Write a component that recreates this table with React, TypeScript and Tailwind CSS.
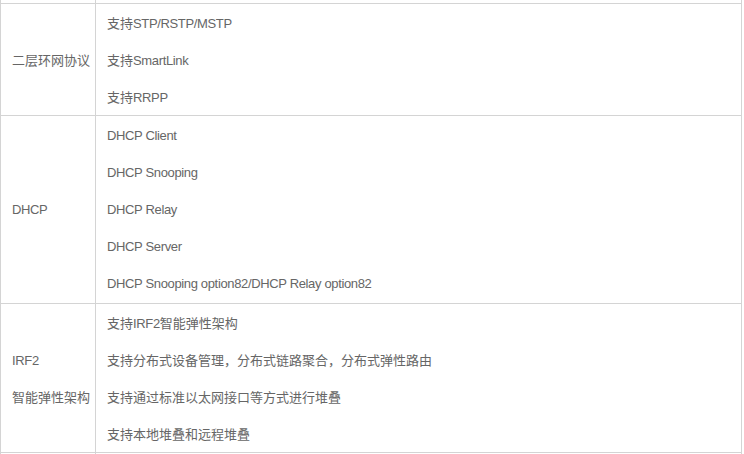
import React from 'react';

interface SpecRow {
  name: string[];
  items: string[];
  extra?: boolean;
}

const rows: SpecRow[] = [
  {
    name: ['二层环网协议'],
    items: ['支持STP/RSTP/MSTP', '支持SmartLink', '支持RRPP'],
  },
  {
    name: ['DHCP'],
    items: [
      'DHCP Client',
      'DHCP Snooping',
      'DHCP Relay',
      'DHCP Server',
      'DHCP Snooping option82/DHCP Relay option82',
    ],
    extra: true,
  },
  {
    name: ['IRF2', '智能弹性架构'],
    items: [
      '支持IRF2智能弹性架构',
      '支持分布式设备管理，分布式链路聚合，分布式弹性路由',
      '支持通过标准以太网接口等方式进行堆叠',
      '支持本地堆叠和远程堆叠',
    ],
  },
];

// latin runs are a little tighter than Arial in the original
function Text({ value }: { value: string }) {
  return (
    <>
      {value.split(/([\x00-\x7F]+)/).map((part, i) =>
        /^[\x00-\x7F]+$/.test(part) ? (
          <span key={i} className="tracking-[-0.35px]">{part}</span>
        ) : (
          <span key={i}>{part}</span>
        )
      )}
    </>
  );
}

export default function App() {
  return (
    <div
      className="w-[744px] h-[454px] overflow-hidden bg-white text-[13px] text-[#666]"
      style={{ fontFamily: '"Liberation Sans", "Noto Sans CJK SC", sans-serif' }}
    >
      <table className="w-[742px] border-collapse table-fixed">
        <colgroup>
          <col className="w-[95px]" />
          <col />
        </colgroup>
        <tbody>
          {/* tail of the previous row */}
          <tr>
            <td className="h-[3px] p-0 border border-[#d4d4d4] border-t-0" />
            <td className="h-[3px] p-0 border border-[#d4d4d4] border-t-0" />
          </tr>
          {rows.map((row) => (
            <tr key={row.name[0]}>
              <td className={`border border-[#d4d4d4] p-0 pl-[11px] align-middle ${row.extra ? 'pb-[2px]' : ''}`}>
                {row.name.map((n) => (
                  <div key={n} className="h-[37px] pt-[3px] flex items-center whitespace-nowrap">
                    <Text value={n} />
                  </div>
                ))}
              </td>
              <td className={`border border-[#d4d4d4] p-0 pl-[11px] align-top ${row.extra ? 'pb-[2px]' : ''}`}>
                {row.items.map((item) => (
                  <div key={item} className="h-[37px] pt-[3px] flex items-center whitespace-nowrap">
                    <Text value={item} />
                  </div>
                ))}
              </td>
            </tr>
          ))}
          <tr>
            <td className="h-[10px] p-0 border border-[#d4d4d4]" />
            <td className="h-[10px] p-0 border border-[#d4d4d4]" />
          </tr>
        </tbody>
      </table>
    </div>
  );
}
